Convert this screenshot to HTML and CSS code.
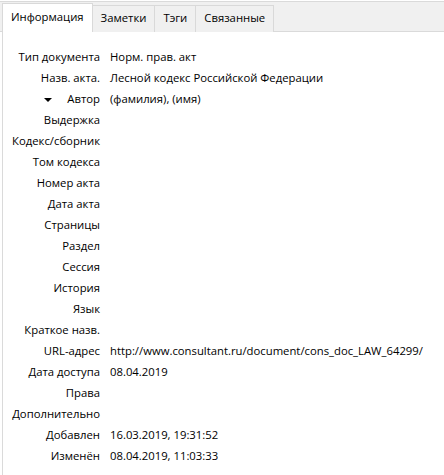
FILE: index.html
```html
<!DOCTYPE html>
<html lang="ru">
<head>
<meta charset="UTF-8" />
<title>Информация</title>
<link rel="stylesheet" href="styles.css">
</head>
<body>
    <div class="tabbar">
        <div class="tab active">Информация</div>
        <div class="tab">Заметки</div>
        <div class="tab">Тэги</div>
        <div class="tab">Связанные</div>
    </div>
    <div class="panel">
        <div class="fields">
            <div class="label">Тип документа</div><div class="value">Норм. прав. акт</div>
            <div class="label">Назв. акта.</div><div class="value">Лесной кодекс Российской Федерации</div>
            <div class="label"><span class="twisty"></span>Автор</div><div class="value">(фамилия), (имя)</div>
            <div class="label">Выдержка</div><div class="value"></div>
            <div class="label">Кодекс/сборник</div><div class="value"></div>
            <div class="label">Том кодекса</div><div class="value"></div>
            <div class="label">Номер акта</div><div class="value"></div>
            <div class="label">Дата акта</div><div class="value"></div>
            <div class="label">Страницы</div><div class="value"></div>
            <div class="label">Раздел</div><div class="value"></div>
            <div class="label">Сессия</div><div class="value"></div>
            <div class="label">История</div><div class="value"></div>
            <div class="label">Язык</div><div class="value"></div>
            <div class="label">Краткое назв.</div><div class="value"></div>
            <div class="label">URL-адрес</div><div class="value">http://www.consultant.ru/document/cons_doc_LAW_64299/</div>
            <div class="label">Дата доступа</div><div class="value">08.04.2019</div>
            <div class="label">Права</div><div class="value"></div>
            <div class="label">Дополнительно</div><div class="value"></div>
            <div class="label">Добавлен</div><div class="value">16.03.2019, 19:31:52</div>
            <div class="label">Изменён</div><div class="value">08.04.2019, 11:03:33</div>
        </div>
    </div>
</body>
</html>
```

FILE: styles.css
```css
html, body {
    height: 100%;
    overflow: hidden;
}

body {
    margin: 0;
    padding-top: 1px;
    box-sizing: border-box;
    display: flex;
    flex-direction: column;
    background: #fff;
    color: #000;
    font-family: "Open Sans", "Noto Sans", sans-serif;
    font-size: 11.3px;
}

/* полоса вкладок */
.tabbar {
    display: flex;
    align-items: flex-end;
    flex: none;
    height: 29px;
    padding-left: 2px;
    background: #f0f0f0;
    border-top: 1px solid #dadada;
    border-bottom: 1px solid #dadada;
}

.tab {
    height: 26px;
    line-height: 24px;
    padding: 0 8px;
    border: 1px solid #d9d9d9;
    border-bottom: none;
    margin-left: -1px;
    margin-bottom: -1px;
    background: #f0f0f0;
}

.tab:first-child {
    margin-left: 0;
}

.tab.active {
    background: #fff;
    height: 28px;
    line-height: 26px;
}

.panel {
    flex: 1;
    margin-left: 2px;
    border-left: 1px solid #dadada;
    padding-top: 14px;
}

.fields {
    display: grid;
    grid-template-columns: 97px 1fr;
    column-gap: 10px;
    grid-auto-rows: 21px;
    align-items: center;
}

.label {
    text-align: right;
    white-space: nowrap;
}

.value {
    white-space: nowrap;
}

.twisty {
    display: inline-block;
    width: 0;
    height: 0;
    border-left: 4px solid transparent;
    border-right: 4px solid transparent;
    border-top: 4px solid #000;
    margin-right: 15px;
    vertical-align: middle;
}
```
